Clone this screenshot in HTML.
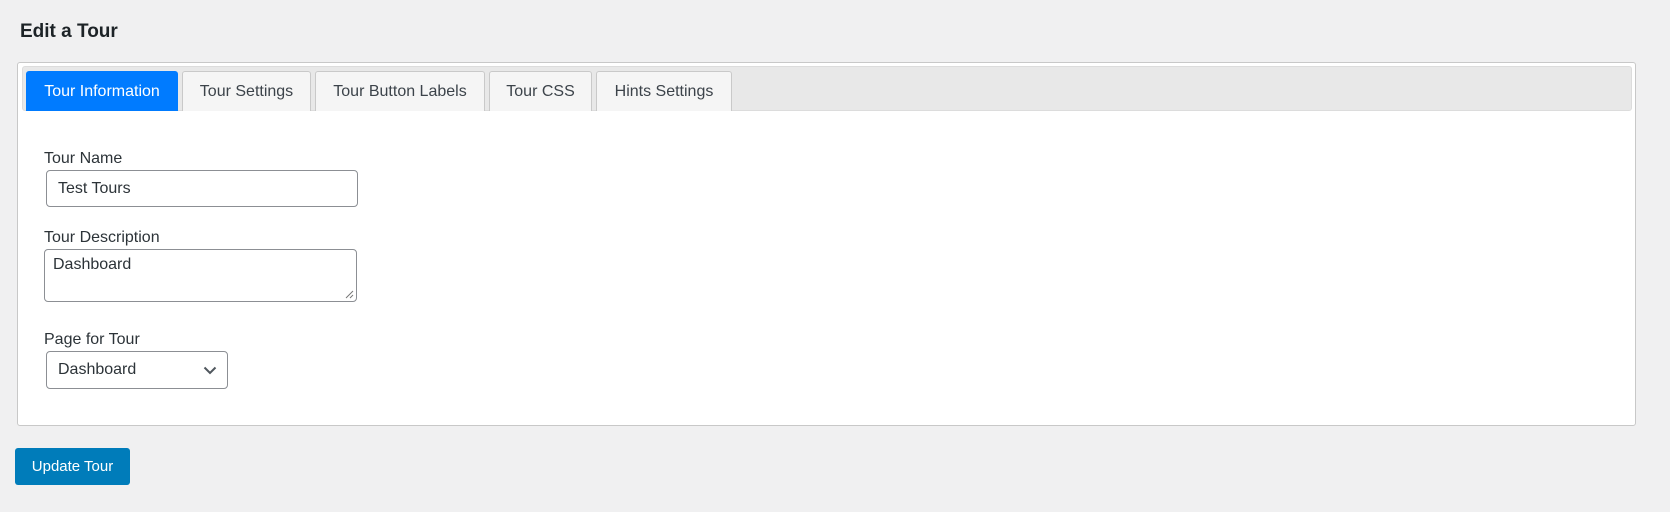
<!DOCTYPE html>
<html><head><style>
body{margin:0;width:1670px;height:512px;background:#f0f0f1;font-family:"Liberation Sans",sans-serif;color:#3c434a;position:relative;overflow:hidden}
.a{position:absolute;box-sizing:border-box}
h1{position:absolute;left:20px;top:21px;margin:0;font-size:19px;font-weight:bold;color:#1d2327}
.panel{left:17px;top:62px;width:1619px;height:364px;background:#fff;border:1px solid #c8c8c8;border-radius:3px}
.bar{left:22px;top:66px;width:1610px;height:45px;background:#e8e8e8;border:1px solid #dcdcdc;border-radius:3px}
.tab{top:71px;height:40px;background:#f5f5f5;border:1px solid #c9c9c9;border-bottom:none;border-radius:3px 3px 0 0;font-size:16px;line-height:40px;text-align:center;color:#3c434a}
.tab.on{background:#007bff;border-color:#007bff;color:#fff}
.lbl{left:44px;font-size:16px;color:#2c3338}
.in{border:1px solid #8c8f94;border-radius:4px;background:#fff;font-size:16px;color:#2c3338}
.btn{left:15px;top:448px;width:115px;height:37px;background:#007cba;border-radius:3px;color:#fff;font-size:15px;line-height:38px;text-align:center}
</style></head><body>
<h1>Edit a Tour</h1>
<div class="a panel"></div>
<div class="a bar"></div>
<div class="a tab on" style="left:26px;width:152px">Tour Information</div>
<div class="a tab" style="left:182px;width:129px">Tour Settings</div>
<div class="a tab" style="left:315px;width:170px">Tour Button Labels</div>
<div class="a tab" style="left:489px;width:103px">Tour CSS</div>
<div class="a tab" style="left:596px;width:136px">Hints Settings</div>
<div class="a lbl" style="top:150px">Tour Name</div>
<div class="a in" style="left:46px;top:170px;width:312px;height:37px;padding:9px 0 0 11px">Test Tours</div>
<div class="a lbl" style="top:229px">Tour Description</div>
<div class="a in" style="left:44px;top:249px;width:313px;height:53px;padding:6px 0 0 8px">Dashboard
<svg style="position:absolute;right:2px;bottom:2px" width="9" height="9"><path d="M8 1L1 8M8 5L5 8" stroke="#777" stroke-width="1"/></svg></div>
<div class="a lbl" style="top:331px">Page for Tour</div>
<div class="a in" style="left:46px;top:351px;width:182px;height:38px;padding:9px 0 0 11px">Dashboard
<svg style="position:absolute;right:10px;top:14px" width="14" height="9"><path d="M1.5 1.5L7 7L12.5 1.5" fill="none" stroke="#50575e" stroke-width="2"/></svg></div>
<div class="a btn">Update Tour</div>
</body></html>
